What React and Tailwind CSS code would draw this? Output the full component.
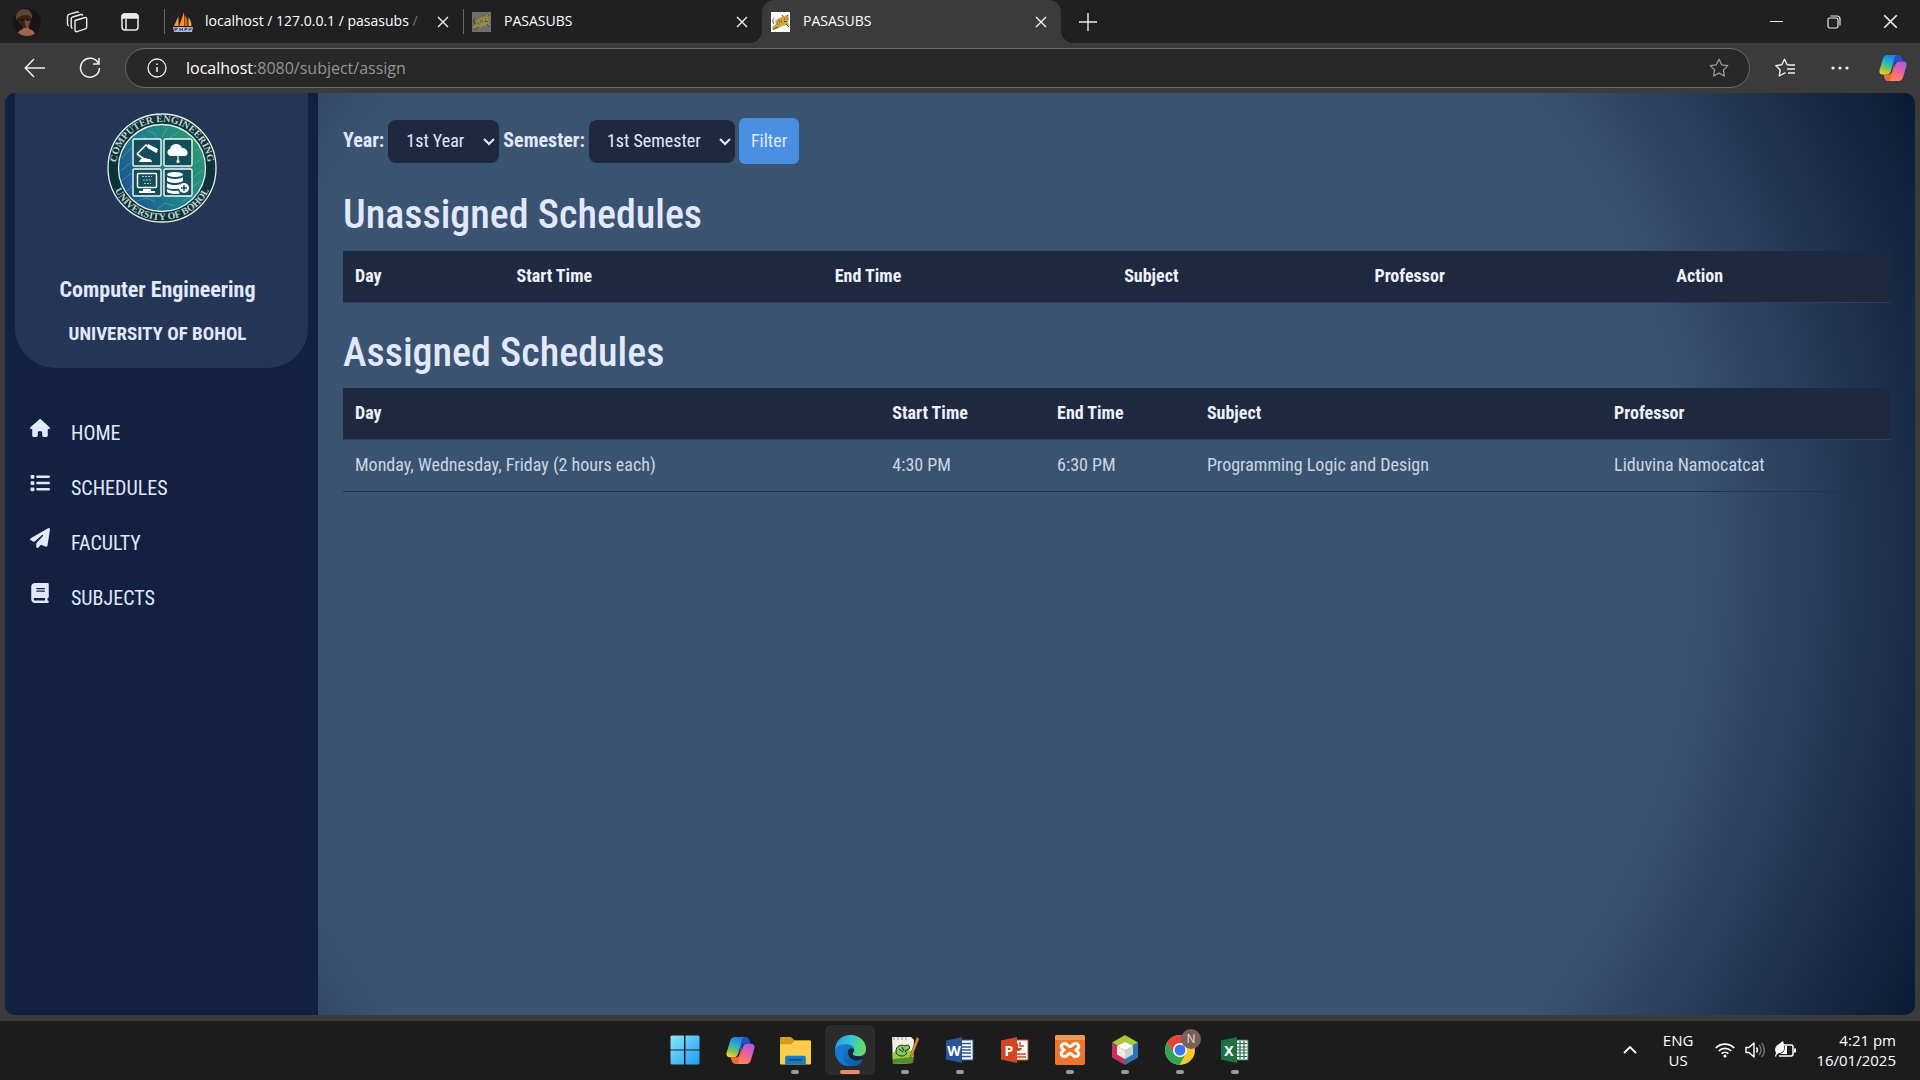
import { useId } from "react";
import { FaHouse, FaList, FaPaperPlane, FaBook } from "react-icons/fa6";

function Copilot({ className }) {
  const id = useId();
  return (
    <svg viewBox="0 0 28 28" className={className} aria-hidden="true">
      <defs>
        <linearGradient id={id + "a"} x1="0.6" y1="0" x2="0.3" y2="1">
          <stop offset="0" stopColor="#1f7fe0" />
          <stop offset="0.4" stopColor="#27b2d6" />
          <stop offset="0.7" stopColor="#7cc34d" />
          <stop offset="1" stopColor="#f2d02c" />
        </linearGradient>
        <linearGradient id={id + "b"} x1="0.7" y1="0" x2="0.3" y2="1">
          <stop offset="0" stopColor="#a45bea" />
          <stop offset="0.5" stopColor="#f0609a" />
          <stop offset="1" stopColor="#ff8a4c" />
        </linearGradient>
      </defs>
      <path d="M14 1h5.5c1.8 0 2.8 1.3 3.3 3l1 3.5h-5c-2 0-3 1-3.6 3L13 18Z" fill="#2350c8" />
      <path d="M14 27H9c-2 0-3-1.3-3.5-3l-1-3.5h5c2 0 3-1 3.6-3L15.5 10Z" fill="#f26a3c" />
      <path d="M8.5 1H18c-1.6.5-2.3 1.800-2.800 3.500L12 16.500c-.8 2.800-2 4-4.500 4H3.600C.8 20.500-.1 18.400.7 15.600L4 4.500C4.700 2.300 6.200 1 8.500 1Z" fill={`url(#${id}a)`} />
      <path d="M19.500 27H10c1.600-.5 2.300-1.800 2.800-3.500L16 11.500c.8-2.800 2-4 4.500-4h3.900c2.800 0 3.700 2.100 2.900 4.900L24 23.500c-.7 2.200-2.200 3.500-4.500 3.500Z" fill={`url(#${id}b)`} />
    </svg>
  );
}

function CloseGlyph({ className = "size-3" }) {
  return (
    <svg viewBox="0 0 12 12" className={className} fill="none" stroke="currentColor" strokeWidth="1.4" aria-hidden="true">
      <path d="M1 1l10 10M11 1L1 11" />
    </svg>
  );
}

function SailIcon() {
  return (
    <svg viewBox="0 0 20 20" className="size-5 shrink-0" aria-hidden="true">
      <path d="M5.500 4 1 14h4.500Z" fill="#f4a03a" />
      <path d="M11 0 6.300 14H11Z" fill="#f79a1c" />
      <path d="M11.500 3c3 3 3.500 7 2.800 11h-2.800Z" fill="#e8601c" />
      <path d="M15.500 5c2 3 3 6 3 9h-3Z" fill="#f5b042" />
      <path d="M0 15h20l-1 5H1Z" fill="#b9b7cc" />
      <path d="M2 19v-3h2v1.500H2M7 19v-3M9.500 19v-3M7 17.500h2.500M12 19v-3h2v1.500h-2M16 19l.5-3 1 2 1-2" stroke="#4a4888" fill="none" />
    </svg>
  );
}

function CatIcon({ dim }) {
  return (
    <svg viewBox="0 0 20 20" className="size-5 shrink-0" aria-hidden="true">
      <rect x="0" y="0" width="19" height="20" fill={dim ? "#6f706c" : "#ffffff"} />
      <path d="M1 15 5 12 4 9l4-3 3-1V3l2 1.200L16 3l1-.5 1 4-1 3.500 1 4-3-1-4 1-3 2-3 .5L2 18Z" fill={dim ? "#9a8a4e" : "#d0a548"} />
      <path d="M3 12C1 9 2 7 3 6M11 3l1 1.500M17 3l-1 1.500M7 15l-5 2.500M15 12l3 3M13 7h1M16 7h.7M13 9.500h2.500" stroke={dim ? "#3e3a2c" : "#54452a"} fill="none" />
      <path d="M8 8l1 3M10 7.500l1 3M6 10l1 3" stroke={dim ? "#6c5f35" : "#8a6a24"} fill="none" />
    </svg>
  );
}

function Tab({ icon, title, active, fade }) {
  return (
    <div
      className={
        active
          ? "relative flex w-[299px] items-center rounded-t-xl bg-[#3b3b3b] pl-[9px] pr-[10px]"
          : "flex w-[299px] items-center pr-[10px]"
      }
    >
      {active ? (
        <>
          <span className="absolute bottom-0 -left-3 size-3 bg-[radial-gradient(circle_at_0_0,#202020_12px,#3b3b3b_12px)]" />
          <span className="absolute bottom-0 -right-3 size-3 bg-[radial-gradient(circle_at_100%_0,#202020_12px,#3b3b3b_12px)]" />
        </>
      ) : (
        <span className="mr-2 h-[25px] w-px bg-[#6a6a6a]" />
      )}
      {icon}
      <span className="ml-3 flex-1 overflow-hidden whitespace-nowrap pb-0.5 text-[14px] text-white">
        {title}
        {fade && <span className="text-[#777]"> /</span>}
      </span>
      <button type="button" aria-label={"Close " + title} className="ml-2 grid size-5 place-items-center text-[#f2f2f2]">
        <CloseGlyph className="size-[12px]" />
      </button>
    </div>
  );
}

function TabStrip() {
  return (
    <header className="flex h-[43px] shrink-0 bg-[#202020] text-[#ececec]">
      <div className="flex w-[164px] shrink-0 items-center pl-[13px]">
        <button type="button" aria-label="Profile" className="size-7 overflow-hidden rounded-full">
          <svg viewBox="0 0 28 28" aria-hidden="true">
            <circle cx="14" cy="14" r="14" fill="#17141a" />
            <path d="M4 28c0-4 3-6 6-7l1-4h4l1 4c4 1 6 3 6 7Z" fill="#a2634e" />
            <path d="M5 11c0-6 3-9 7-9s6 4 6 9-3 9-5.500 9S5 16 5 11Z" fill="#3a211a" />
            <path d="M12 12h5c0 4-1 7-3.500 8-1-1-2-4-1.500-8Z" fill="#7a4532" />
            <path d="M3 13C2 5 6 1 11 1c5 0 9 3 8 10-2-3-3-4-6-4S5 8 3 13Z" fill="#5a4632" />
            <path d="M8 12h3M13 12h3" stroke="#1d0f0c" strokeWidth="1.500" />
          </svg>
        </button>
        <button type="button" aria-label="Workspaces" className="ml-[25px]">
          <svg viewBox="0 0 22 22" className="size-[22px]" fill="none" stroke="currentColor" strokeWidth="1.400" strokeLinejoin="round" aria-hidden="true">
            <path d="m9 9.500 10-3a1.300 1.300 0 0 1 1.700 1.200v8.300a2 2 0 0 1-1.400 1.900l-8.300 2.700A1.500 1.500 0 0 1 9 19.200Z" />
            <path d="M6.500 17.500A2 2 0 0 1 5.200 15.600V7.800A2 2 0 0 1 6.600 6L15 3.500a1.500 1.500 0 0 1 1.800.9" />
            <path d="M2.800 14.800a2 2 0 0 1-1.300-1.900V5.200a2 2 0 0 1 1.400-1.900L11 1a1.500 1.500 0 0 1 1.800.8" />
          </svg>
        </button>
        <button type="button" aria-label="Tab actions" className="ml-[33px]">
          <svg viewBox="0 0 18 18" className="size-[18px]" fill="none" stroke="currentColor" strokeWidth="1.500" aria-hidden="true">
            <rect x="1" y="1" width="16" height="16" rx="3" />
            <path d="M1 5V3.500A2.500 2.500 0 0 1 3.500 1h11A2.500 2.500 0 0 1 17 3.500V5H1Z" fill="currentColor" />
            <path d="M5 6v11" />
          </svg>
        </button>
      </div>
      <nav className="flex" aria-label="Open tabs">
        <Tab icon={<SailIcon />} title="localhost / 127.0.0.1 / pasasubs" fade />
        <Tab icon={<CatIcon dim />} title="PASASUBS" />
        <Tab icon={<CatIcon />} title="PASASUBS" active />
      </nav>
      <button type="button" aria-label="New tab" className="ml-[18px]">
        <svg viewBox="0 0 18 18" className="size-[18px]" stroke="currentColor" strokeWidth="1.400" aria-hidden="true">
          <path d="M9 0v18M0 9h18" />
        </svg>
      </button>
      <div className="ml-auto flex pr-px">
        <button type="button" aria-label="Minimize" className="grid w-[57px] place-items-center">
          <svg viewBox="0 0 13 13" className="size-[13px]" stroke="currentColor" aria-hidden="true"><path d="M0 6.500h13" /></svg>
        </button>
        <button type="button" aria-label="Restore" className="grid w-[57px] place-items-center">
          <svg viewBox="0 0 14 14" className="size-[14px]" fill="none" stroke="currentColor" strokeWidth="1.200" aria-hidden="true">
            <rect x="1" y="3" width="10" height="10" rx="1.800" />
            <path d="M3.500 1h6.500a3 3 0 0 1 3 3v6.500" />
          </svg>
        </button>
        <button type="button" aria-label="Close window" className="grid w-[57px] place-items-center">
          <CloseGlyph className="size-[15px]" />
        </button>
      </div>
    </header>
  );
}

function AddressBar() {
  return (
    <div className="flex h-[50px] shrink-0 items-center bg-[#3b3b3b] text-[#f0f0f0]">
      <button type="button" aria-label="Back" className="ml-6">
        <svg viewBox="0 0 22 20" className="h-5 w-[22px]" fill="none" stroke="currentColor" strokeWidth="1.500" aria-hidden="true">
          <path d="M21 10H1.500M10 1 1.300 10 10 19" />
        </svg>
      </button>
      <button type="button" aria-label="Refresh" className="ml-[33px]">
        <svg viewBox="0 0 22 22" className="size-[22px]" fill="none" stroke="currentColor" strokeWidth="1.500" aria-hidden="true">
          <path d="M19.500 6.500A9.500 9.500 0 1 0 20.500 11M20 1v6h-6" />
        </svg>
      </button>
      <div className="ml-6 flex h-10 flex-1 items-center rounded-full border border-[#6a6a6a] bg-[#282828] pl-[21px] pr-5">
        <svg viewBox="0 0 20 20" className="size-5 shrink-0" fill="none" stroke="currentColor" strokeWidth="1.300" aria-hidden="true">
          <circle cx="10" cy="10" r="9" />
          <path d="M10 9v5M10 5.500v1.500" strokeWidth="1.500" />
        </svg>
        <a href="#address" className="ml-[19px] flex-1 text-[16px] text-[#949494]">
          <span className="text-white">localhost</span>:8080/subject/assign
        </a>
        <button type="button" aria-label="Add to favorites" className="text-[#9a9a9a]">
          <svg viewBox="0 0 20 20" className="size-5" fill="none" stroke="currentColor" strokeWidth="1.300" strokeLinejoin="round" aria-hidden="true">
            <path d="m10 1.200 2.700 5.600 6.100.8-4.400 4.300 1 6.100L10 15.100 4.600 18l1-6.100L1.200 7.600l6.100-.8Z" />
          </svg>
        </button>
      </div>
      <button type="button" aria-label="Favorites" className="ml-[25px]">
        <svg viewBox="0 0 20 20" className="size-5" fill="none" stroke="currentColor" strokeWidth="1.400" strokeLinejoin="round" aria-hidden="true">
          <path d="M14.500 7.100 12.200 6.800 9.500 1.200 6.800 6.800.8 7.600l4.400 4.300-1 6.100 5.300-2.900 1-.5M13 7h7M12 11h8M13 15h7" />
        </svg>
      </button>
      <button type="button" aria-label="Settings and more" className="ml-9">
        <svg viewBox="0 0 18 4" className="w-[18px]" fill="currentColor" aria-hidden="true">
          <circle cx="2" cy="2" r="1.600" /><circle cx="9" cy="2" r="1.600" /><circle cx="16" cy="2" r="1.600" />
        </svg>
      </button>
      <button type="button" aria-label="Copilot" className="ml-[30px] mr-[13px]">
        <Copilot className="size-7" />
      </button>
    </div>
  );
}

function DepartmentSeal() {
  return (
    <svg viewBox="0 0 110 110" className="size-[110px]" role="img" aria-label="Computer Engineering seal">
      <defs>
        <linearGradient id="seal" x1="0" y1="0.8" x2="1" y2="0.3">
          <stop offset="0" stopColor="#1b4f8e" />
          <stop offset="0.5" stopColor="#1f7f8e" />
          <stop offset="1" stopColor="#2c9a6a" />
        </linearGradient>
        <path id="arcTop" d="M9 55A46 46 0 0 1 101 55" />
        <path id="arcBottom" d="M3 55A52 52 0 0 0 107 55" />
      </defs>
      <circle cx="55" cy="55" r="54" fill="#0c3338" stroke="#e6f0f2" strokeWidth="1.300" />
      <circle cx="55" cy="55" r="43.500" fill="url(#seal)" stroke="#e6f0f2" strokeWidth="1.300" />
      <g fill="none" stroke="#6fb7bd" strokeWidth="0.700" opacity="0.7">
        <path d="M15 45l9-10M14 58l10-9M15 68l9-8M20 78l6-6M40 17l8 4 3 6M60 15l-5 9M72 19l-10 6M95 45l-8 6M96 57l-9 7M94 68l-8 5M30 88l10-3 8 4M50 96l8-6 10 3M75 89l8-6M35 22l6 5M88 38l6-3" />
      </g>
      <g fill="#134e5a" stroke="#f2f8f8" strokeWidth="1.400">
        <rect x="26" y="26" width="28" height="27" rx="1.500" />
        <rect x="57" y="26" width="28" height="27" rx="1.500" />
        <rect x="26" y="56" width="28" height="27" rx="1.500" />
        <rect x="57" y="56" width="28" height="27" rx="1.500" />
      </g>
      <path d="M30 41l9-9 11 7M30 41l7 5" fill="none" stroke="#fff" strokeWidth="1.600" />
      <path d="M41 31l10 5-1.500 4-9-5ZM32 49c1-3 3-4 5-4 3 0 3 1 5 1s3 2 3 3Z" fill="#fff" />
      <path d="M64 43c-4 0-5-6-1-7 1-6 10-7 12-1 5-1 8 7 3 8Z" fill="#fff" />
      <path d="M71 42v7" stroke="#fff" strokeWidth="1.200" fill="none" />
      <circle cx="71" cy="48.500" r="1.600" fill="#fff" />
      <rect x="30.500" y="60.500" width="19" height="14" rx="1" fill="none" stroke="#fff" strokeWidth="1.500" />
      <path d="M35 63.500h10M36 67h9M37 70.500h7" stroke="#a9c9cc" strokeDasharray="2 1" />
      <path d="M36 77h8M32 79h16" stroke="#fff" strokeWidth="1.800" />
      <g fill="#fff">
        <ellipse cx="68" cy="61.500" rx="8" ry="2.500" />
        <path d="M60 64c3 2.500 13 2.500 16 0v4c-3 2.500-13 2.500-16 0ZM60 70c3 2.500 11 2.500 13 1v4c-3 1.500-10 1.500-13-.5ZM60 76c3 2 8 2.300 11 1.500l2 3c-4 1-11 .5-13-1.500Z" />
        <circle cx="77" cy="75" r="5" />
      </g>
      <path d="M77 72v6M74 75h6" stroke="#134e5a" strokeWidth="1.500" />
      <g fill="#c3d2d2" fontFamily="Liberation Serif, serif" fontSize="10" textAnchor="middle">
        <text><textPath href="#arcTop" startOffset="50%">COMPUTER ENGINEERING</textPath></text>
        <text><textPath href="#arcBottom" startOffset="50%">UNIVERSITY OF BOHOL</textPath></text>
      </g>
    </svg>
  );
}

const NAV = [
  ["HOME", FaHouse],
  ["SCHEDULES", FaList],
  ["FACULTY", FaPaperPlane],
  ["SUBJECTS", FaBook],
];

function Sidebar() {
  return (
    <aside className="w-[313px] shrink-0 bg-[#11213f] px-[10px]">
      <div className="flex flex-col items-center rounded-b-[40px] bg-[#243555] py-5 font-bold">
        <DepartmentSeal />
        <div className="mt-[50px] flex flex-col items-center gap-[14px] pr-2">
          <p className="text-[22px] leading-[33px]">Computer Engineering</p>
          <p className="text-[19px] leading-[28px]">UNIVERSITY OF BOHOL</p>
        </div>
      </div>
      <nav className="mt-[50px] flex flex-col gap-[25px] pl-[15px]">
        {NAV.map(([label, Icon]) => (
          <a key={label} href={"#" + label.toLowerCase()} className="flex items-start text-[20px]">
            <span className="w-[41px] shrink-0"><Icon className="h-5 w-auto" /></span>
            <span className="leading-[30px]">{label}</span>
          </a>
        ))}
      </nav>
    </aside>
  );
}

function Picker({ id, value, options, className }) {
  return (
    <div className="relative">
      <select
        id={id}
        defaultValue={value}
        className={"h-[43px] appearance-none rounded-lg bg-[#1e293f] pb-0.5 pl-[18px] text-[18px] " + className}
      >
        {options.map((o) => <option key={o}>{o}</option>)}
      </select>
      <svg viewBox="0 0 12 8" className="pointer-events-none absolute right-1 top-[18px] w-3" fill="none" stroke="currentColor" strokeWidth="2" aria-hidden="true">
        <path d="m1 1 5 5 5-5" />
      </svg>
    </div>
  );
}

function DataTable({ columns, rows }) {
  return (
    <table className="w-full text-left text-[18px] leading-[27px]">
      <thead>
        <tr className="border-b border-[#2f3e58] bg-[#1e293f]">
          {columns.map((c) => <th key={c} scope="col" className="px-3 pb-[13px] pt-[11px] font-bold text-[#eef1fb]">{c}</th>)}
        </tr>
      </thead>
      <tbody>
        {rows.map((r) => (
          <tr key={r[0]} className="border-b border-[#223350] text-[#cbd5e0]">
            {r.map((c) => <td key={c} className="px-3 pb-[13px] pt-[11px]">{c}</td>)}
          </tr>
        ))}
      </tbody>
    </table>
  );
}

function Content() {
  return (
    <main className="flex-1 pl-[25px] pr-6 pt-[25px]">
      <form className="flex items-center gap-1" onSubmit={(e) => e.preventDefault()}>
        <label htmlFor="year" className="pb-0.5 text-[20px] font-bold">Year:</label>
        <Picker id="year" value="1st Year" options={["1st Year", "2nd Year", "3rd Year", "4th Year"]} className="w-[111px]" />
        <label htmlFor="semester" className="pb-0.5 text-[20px] font-bold">Semester:</label>
        <Picker id="semester" value="1st Semester" options={["1st Semester", "2nd Semester"]} className="w-[146px]" />
        <button type="submit" className="h-[46px] rounded-md bg-[#4a90e2] px-3 pb-0.5 text-[18px]">Filter</button>
      </form>
      <h1 className="mb-3 mt-[27px] text-[40px] font-medium leading-[48px]">Unassigned Schedules</h1>
      <DataTable columns={["Day", "Start Time", "End Time", "Subject", "Professor", "Action"]} rows={[]} />
      <h1 className="mb-[11px] mt-[26px] text-[40px] font-medium leading-[48px]">Assigned Schedules</h1>
      <DataTable
        columns={["Day", "Start Time", "End Time", "Subject", "Professor"]}
        rows={[["Monday, Wednesday, Friday (2 hours each)", "4:30 PM", "6:30 PM", "Programming Logic and Design", "Liduvina Namocatcat"]]}
      />
    </main>
  );
}

function OfficeIcon({ letter, dark, light, children }) {
  return (
    <svg viewBox="0 0 30 30" className="size-[30px]" aria-hidden="true">
      <rect x="14" y="5" width="14" height="20" fill="#fff" stroke={light} />
      {children}
      <path d="M1 5.500 17 2v26L1 24.500Z" fill={dark} />
      <text x="9" y="20.500" textAnchor="middle" fontFamily="Open Sans, sans-serif" fontWeight="700" fontSize="14" fill="#fff">{letter}</text>
    </svg>
  );
}

const START = (
  <svg viewBox="0 0 30 30" className="size-[30px]" aria-hidden="true">
    <defs>
      <linearGradient id="win" x1="0" y1="0" x2="1" y2="1">
        <stop offset="0" stopColor="#8be6fd" /><stop offset="1" stopColor="#1a9df5" />
      </linearGradient>
    </defs>
    <path d="M1.500 .5H14v14H.5v-13ZM15.500 .5H28.500l1 1v13h-14ZM.5 15.500H14v14H1.500l-1-1ZM15.500 15.500h14v13l-1 1h-13Z" fill="url(#win)" />
  </svg>
);

const FOLDER = (
  <svg viewBox="0 0 30 30" className="size-[31px]" aria-hidden="true">
    <path d="M0 3.500C0 2.500.7 2 1.500 2h9L14 5h14.500c1 0 1.500.6 1.500 1.500V10H0Z" fill="#d99a1c" />
    <path d="M0 9h11l3-3.500h14.500c1 0 1.500.6 1.500 1.500v20c0 1-.6 1.500-1.500 1.500h-27C.5 28.500 0 28 0 27Z" fill="#fbcd4d" />
    <path d="M5 28.500V22c0-1.500.8-2 2-2h16c1.300 0 2 .6 2 2v6.500Z" fill="#1a7ac4" />
    <path d="M9 24h12" stroke="#0b4a80" strokeWidth="1.500" />
  </svg>
);

const EDGE = (
  <svg viewBox="0 0 30 30" className="size-[31px]" aria-hidden="true">
    <defs>
      <linearGradient id="edgeTop" x1="0" y1="0.3" x2="1" y2="0.4">
        <stop offset="0" stopColor="#2b9fe8" /><stop offset="0.5" stopColor="#35c1d6" /><stop offset="1" stopColor="#6fe04f" />
      </linearGradient>
      <linearGradient id="edgeLow" x1="0" y1="0" x2="1" y2="1">
        <stop offset="0" stopColor="#1d8fe0" /><stop offset="1" stopColor="#0b4fa0" />
      </linearGradient>
    </defs>
    <path d="M0 15a15 15 0 0 1 30 0c0 4-3 6-7 6l4 4A15 15 0 0 1 0 15Z" fill="url(#edgeLow)" />
    <path d="M0 14C1 5 7 0 15 0c9 0 15 6.500 15 13 0 5-3.500 7.500-8 7.500-3 0-5-1-5-2.200 0-1 1.500-1.500 1.500-4 0-3-3-5.300-7.500-5.300C5.500 9 1.500 11 0 14Z" fill="url(#edgeTop)" />
    <path d="M11 13c-6 4-4 15 5 17C7 30 0 23 0 15c1-4 6-6 11-2Z" fill="#1b79d0" />
    <path d="M18.500 14.500c0-2-6-3-6 2.500 0 5 5 8.500 10 7.500 1.500-.3 3-1 4.500-2-1.500-1.500-3-2-5-2-3 0-5-1-5-2.200 0-1 1.500-1.500 1.500-3.800Z" fill="#1c2431" />
  </svg>
);

const NOTEPAD = (
  <svg viewBox="0 0 30 30" className="size-[30px]" aria-hidden="true">
    <path d="M2 2h19l3 3-1 23-20 1Z" fill="#eef0e4" />
    <path d="M2.500 18c6-4 15-4 21-1l-.5 11-20 1Z" fill="#9acb3c" />
    <path d="M3 24l20-2v6l-20 1Z" fill="#4f8f2a" />
    <path d="M6 16c0-5 5-7 9-5 3-2 6 0 4 3l-4 2c3 2 1 5-3 5s-6-2-6-5ZM9 14l4 3M12 12l2 4" fill="#8cc466" stroke="#17330f" />
    <path d="M27 2 21 18l-1 5 3-4 6-15Z" fill="#d99a3c" stroke="#7c4c14" strokeWidth="0.600" />
    <path d="M4 2v3M8 2v3M12 2v3M16 2v3" stroke="#9a9a9a" />
  </svg>
);

const WORD = (
  <OfficeIcon letter="W" dark="#2a5699" light="#2a5699">
    <path d="M17 8.500h9M17 12h9M17 15h9M17 18h9M17 21.500h9" stroke="#2a5699" strokeWidth="1.300" />
  </OfficeIcon>
);

const POWERPOINT = (
  <OfficeIcon letter="P" dark="#d04727" light="#d04727">
    <path d="M18 8a4 4 0 1 0 4 5h-4Z" fill="#d04727" />
    <path d="M20 7v4h4M17 19h9M17 22h9" fill="none" stroke="#d04727" strokeWidth="1.500" />
  </OfficeIcon>
);

const EXCEL = (
  <OfficeIcon letter="X" dark="#1f7145" light="#1f7145">
    <path d="M17 8.500h10M17 12h10M17 15h10M17 18h10M17 21.500h10M20 6v18M24 6v18" stroke="#1f7145" strokeWidth="1.200" />
  </OfficeIcon>
);

const XAMPP = (
  <svg viewBox="0 0 30 30" className="size-[30px]" aria-hidden="true">
    <rect width="30" height="30" rx="2" fill="#e9772d" />
    <rect width="30" height="5" rx="2" fill="#f09a5a" />
    <path d="M9.500 8.500c-3 0-4.500 3-2 5l1.500 1.500-1.500 1.500c-2.500 2-1 5 2 5 2 0 2.500-1 3.500-2 1-1.200 3-1.200 4 0 1 1 1.500 2 3.500 2 3 0 4.500-3 2-5L21 15l1.500-1.500c2.500-2 1-5-2-5-2 0-2.500 1-3.500 2-1 1.200-3 1.200-4 0-1-1-1.500-2-3.500-2Z" fill="none" stroke="#fff" strokeWidth="3" />
  </svg>
);

const NETBEANS = (
  <svg viewBox="0 0 30 30" className="size-[30px]" aria-hidden="true">
    <path d="M15 0 28 7.500 15 15 2 7.500Z" fill="#a5c83c" />
    <path d="M2 7.500 15 15v15L2 22.500Z" fill="#c8315c" />
    <path d="M28 7.500 15 15v15l13-7.500Z" fill="#2f74b8" />
    <path d="M15 7 23 11 15 15.500 7 11Z" fill="#fdfdfd" />
    <path d="M7 11l8 4.500V24l-8-4.500Z" fill="#e9e9e6" />
    <path d="M23 11l-8 4.500V24l8-4.500Z" fill="#cfd3cb" />
  </svg>
);

const CHROME = (
  <span className="relative">
    <svg viewBox="0 0 30 30" className="size-[30px]" aria-hidden="true">
      <circle cx="15" cy="15" r="15" fill="#f7c52c" />
      <path d="M15 8h13.300A15 15 0 0 0 2 7.500L9 18.500Z" fill="#e0443a" />
      <path d="M2 7.500A15 15 0 0 0 14.500 30L21 18.500c-3 5-9 5-12 0Z" fill="#31a354" />
      <circle cx="15" cy="15" r="7" fill="#fff" />
      <circle cx="15" cy="15" r="5.500" fill="#3b78e7" />
    </svg>
    <span className="absolute -right-1.5 -top-1.5 grid size-5 place-items-center rounded-full bg-[#7b6058] text-[12px] leading-none text-[#e6dcd8]">N</span>
  </span>
);

const APPS = [
  ["Start", START],
  ["Copilot", <Copilot className="size-[29px]" />],
  ["File Explorer", FOLDER, true],
  ["Edge", EDGE, true, true],
  ["Notepad++", NOTEPAD, true],
  ["Word", WORD, true],
  ["PowerPoint", POWERPOINT],
  ["XAMPP", XAMPP, true],
  ["NetBeans", NETBEANS, true],
  ["Chrome", CHROME, true],
  ["Excel", EXCEL, true],
];

function Taskbar() {
  return (
    <footer className="grid h-[59px] shrink-0 grid-cols-[1fr_auto_1fr] items-center bg-[#1c1c1c] pb-px text-[15px] leading-5 text-white">
      <div className="col-start-2 flex gap-[5px]">
        {APPS.map(([name, icon, running, current]) => (
          <button
            key={name}
            type="button"
            aria-label={name}
            className={"relative grid size-[50px] place-items-center rounded-md " + (current ? "bg-[#2b2b2b]" : "")}
          >
            {icon}
            {running && (
              <span className={"absolute bottom-px h-1 rounded-full " + (current ? "w-5 bg-[#ec8a70]" : "w-2 bg-[#9a9a9a]")} />
            )}
          </button>
        ))}
      </div>
      <div className="flex items-center justify-end pr-[24px]">
        <svg viewBox="0 0 14 8" className="w-[14px]" fill="none" stroke="currentColor" strokeWidth="1.800" aria-hidden="true">
          <path d="m1 7 6-6 6 6" />
        </svg>
        <div className="ml-[26px] text-center">ENG<br />US</div>
        <svg viewBox="0 0 20 16" className="ml-[22px] w-5" fill="none" stroke="currentColor" strokeWidth="1.700" aria-hidden="true">
          <path d="M.8 6a13 13 0 0 1 18.400 0M3.800 9a8.800 8.800 0 0 1 12.400 0M6.600 11.700a5 5 0 0 1 6.800 0" />
          <circle cx="10" cy="14" r="1.600" fill="currentColor" stroke="none" />
        </svg>
        <svg viewBox="0 0 20 18" className="ml-[10px] w-5" fill="none" stroke="currentColor" strokeWidth="1.400" strokeLinejoin="round" aria-hidden="true">
          <path d="M1 6.500h3L9 2v14l-5-4.500H1ZM11.500 6.500a4 4 0 0 1 0 5" />
          <path d="M14 4a7 7 0 0 1 0 10M16.500 2a10 10 0 0 1 0 14" opacity="0.4" />
        </svg>
        <svg viewBox="0 0 21 18" className="ml-[10px] w-[21px]" aria-hidden="true">
          <path d="M9 4h7a2 2 0 0 1 2 2v7a2 2 0 0 1-2 2H4" fill="none" stroke="currentColor" strokeWidth="1.500" />
          <path d="M19 7.500h2v4h-2ZM0 9c0-4 3-5 8-9 2 6 2 11-3 12l-3 1-1 3-1-1 1-3Z" fill="currentColor" />
          <path d="M10 5h2v8H5c4-1 5-4 5-8Z" fill="currentColor" />
        </svg>
        <div className="ml-[20px] text-right">4:21 pm<br />16/01/2025</div>
      </div>
    </footer>
  );
}

export default function App() {
  return (
    <div className="flex min-h-screen flex-col bg-[#3b3b3b] font-['Open_Sans',sans-serif]">
      <TabStrip />
      <AddressBar />
      <div className="mx-[5px] mb-[6px] flex flex-1 overflow-hidden rounded-[10px] bg-[radial-gradient(circle,#3a5371_69%,#0a1a33_100%)] font-['Roboto_Condensed',sans-serif] text-[#e2e8ff]">
        <Sidebar />
        <Content />
      </div>
      <Taskbar />
    </div>
  );
}
